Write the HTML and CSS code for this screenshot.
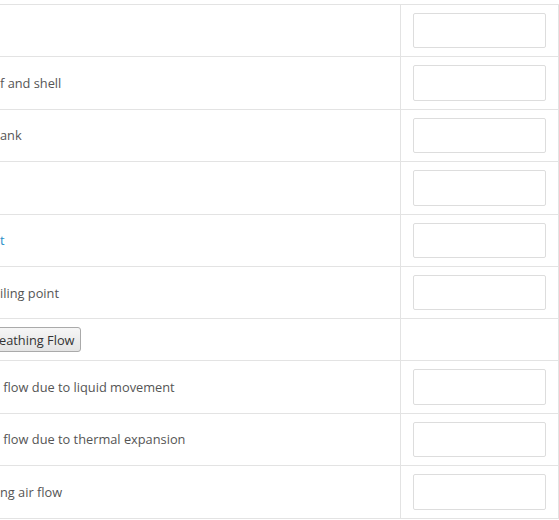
FILE: index.html
```html
<!DOCTYPE html>
<html lang="en">
<head>
  <meta charset="UTF-8">
  <title>Breathing flow</title>
  <link rel="stylesheet" href="styles.css">
</head>
<body>
  <div class="wrap">
    <table class="calc">
      <tr>
        <td class="label"></td>
        <td class="value"><input type="text"></td>
      </tr>
      <tr>
        <td class="label">f and shell</td>
        <td class="value"><input type="text"></td>
      </tr>
      <tr>
        <td class="label">ank</td>
        <td class="value"><input type="text"></td>
      </tr>
      <tr>
        <td class="label"></td>
        <td class="value"><input type="text"></td>
      </tr>
      <tr>
        <td class="label"><a href="#">t</a></td>
        <td class="value"><input type="text"></td>
      </tr>
      <tr>
        <td class="label">iling point</td>
        <td class="value"><input type="text"></td>
      </tr>
      <tr>
        <td class="label"><button class="calc-btn">eathing Flow</button></td>
        <td class="value"></td>
      </tr>
      <tr>
        <td class="label">&nbsp;flow due to liquid movement</td>
        <td class="value"><input type="text"></td>
      </tr>
      <tr>
        <td class="label">&nbsp;flow due to thermal expansion</td>
        <td class="value"><input type="text"></td>
      </tr>
      <tr>
        <td class="label">ng air flow</td>
        <td class="value"><input type="text"></td>
      </tr>
    </table>
  </div>
</body>
</html>
```

FILE: styles.css
```css
body {
  margin: 0;
  font-family: "Open Sans", sans-serif;
  font-size: 12.8px;
  color: #555;
  background: #fff;
  overflow: hidden;
}
.wrap {
  padding-top: 4px;
}
.calc {
  width: 559px;
  border-spacing: 0;
  border-bottom: 1px solid #e3e3e3;
}
.calc td {
  border-top: 1px solid #e3e3e3;
  padding: 8px 0;
  vertical-align: middle;
}
.calc .label {
  width: 400px;
  box-sizing: border-box;
  white-space: nowrap;
}
.calc .value {
  border-left: 1px solid #e3e3e3;
  border-right: 1px solid #e3e3e3;
  padding: 8px 12px;
}
.calc input {
  display: block;
  box-sizing: border-box;
  width: 133px;
  height: 35.4px;
  margin: 0;
  border: 1px solid #ddd;
  border-radius: 2px;
  background: #fff;
}
.calc a {
  color: #2a8fc7;
  text-decoration: none;
}
.calc-btn {
  display: block;
  font-family: "Open Sans", sans-serif;
  font-size: 12.8px;
  color: #333;
  height: 25px;
  margin-left: -7px;
  padding: 0 5px;
  border: 1px solid #aaa;
  border-radius: 3px;
  background: linear-gradient(#f6f6f6, #e4e4e4);
}
```
